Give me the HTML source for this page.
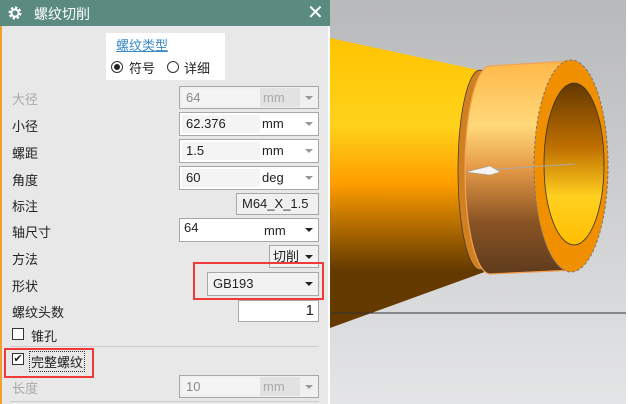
<!DOCTYPE html>
<html><head><meta charset="utf-8"><style>
*{margin:0;padding:0;box-sizing:border-box}
body{width:628px;height:404px;overflow:hidden;position:relative;background:#fff;font-family:"Liberation Sans","Noto Sans CJK SC",sans-serif;font-size:13px;color:#222}
.abs{position:absolute}
#panel{left:0;top:0;width:328px;height:404px;background:#e8e8e8;border-left:2px solid #f0a030}
#title{left:0;top:0;width:330px;height:26px;background:#5a8a80;color:#fff;font-size:14px}
.lbl{position:absolute;left:12px;font-size:13px}
.box{position:absolute;border:1px solid #a8a8a8;background:#fff;font-size:13px}
.val{position:absolute;left:2px;top:2px;bottom:2px;width:78px;background:#f4f4f4;padding-left:4px;line-height:18px}
.unit{position:absolute;left:82px;top:0;line-height:22px}
.arr{position:absolute;right:5px;top:9px;width:0;height:0;border-left:4px solid transparent;border-right:4px solid transparent;border-top:4px solid #999}
.arrd{border-top-color:#222}
.red{position:absolute;border:2.5px solid #f03a3a}
</style></head><body>
<div id="panel" class="abs"></div>
<div id="title" class="abs">
 <svg class="abs" style="left:8px;top:6px" width="14" height="14" viewBox="0 0 14 14"><circle cx="7" cy="7" r="5" fill="none" stroke="#fff" stroke-width="3" stroke-dasharray="2.2 1.7"/><circle cx="7" cy="7" r="3.6" fill="none" stroke="#fff" stroke-width="2"/></svg>
 <div class="abs" style="left:34px;top:4px">螺纹切削</div>
 <div class="abs" style="left:307px;top:0px;font-size:20px;line-height:26px">✕</div>
</div>
<div class="abs" style="left:106px;top:33px;width:119px;height:47px;background:#fff"></div>
<div class="abs" style="left:116px;top:35px;color:#3a8ac8;text-decoration:underline;font-size:13px">螺纹类型</div>
<div class="abs" style="left:111px;top:61px;width:12px;height:12px;border:1px solid #333;border-radius:50%"><div style="margin:2px;width:6px;height:6px;border-radius:50%;background:#222"></div></div>
<div class="abs" style="left:129px;top:58px">符号</div>
<div class="abs" style="left:167px;top:61px;width:12px;height:12px;border:1px solid #333;border-radius:50%"></div>
<div class="abs" style="left:184px;top:58px">详细</div>

<div class="lbl" style="top:89px;color:#aaa">大径</div>
<div class="box" style="left:179px;top:86px;width:140px;height:23px;background:#f0f0f0"><div class="val" style="color:#888">64</div><div class="unit" style="left:80px;top:1px;bottom:1px;width:40px;background:#e2e2e2;color:#aaa;padding-left:3px;line-height:20px">mm</div><div class="arr"></div></div>
<div class="lbl" style="top:116px">小径</div>
<div class="box" style="left:179px;top:112px;width:140px;height:24px"><div class="val">62.376</div><div class="unit">mm</div><div class="arr"></div></div>
<div class="lbl" style="top:143px">螺距</div>
<div class="box" style="left:179px;top:139px;width:140px;height:24px"><div class="val">1.5</div><div class="unit">mm</div><div class="arr"></div></div>
<div class="lbl" style="top:170px">角度</div>
<div class="box" style="left:179px;top:166px;width:140px;height:24px"><div class="val">60</div><div class="unit">deg</div><div class="arr"></div></div>
<div class="lbl" style="top:196px">标注</div>
<div class="box" style="left:236px;top:193px;width:83px;height:22px;background:#f0f0f0;padding-left:5px;line-height:20px">M64_X_1.5</div>
<div class="lbl" style="top:222px">轴尺寸</div>
<div class="box" style="left:179px;top:218px;width:140px;height:24px"><div style="position:absolute;left:4px;top:1px">64</div><div class="unit" style="left:84px;top:1px">mm</div><div class="arr arrd"></div></div>
<div class="lbl" style="top:249px">方法</div>
<div class="box" style="left:269px;top:245px;width:50px;height:23px;background:#f2f2f2;padding-left:3px;line-height:21px">切削<div class="arr arrd"></div></div>
<div class="lbl" style="top:276px">形状</div>
<div class="box" style="left:207px;top:272px;width:112px;height:24px;background:#f2f2f2;padding-left:5px;line-height:22px">GB193<div class="arr arrd"></div></div>
<div class="red" style="left:193px;top:262px;width:131px;height:38px"></div>
<div class="lbl" style="top:302px">螺纹头数</div>
<div class="box" style="left:238px;top:300px;width:81px;height:22px;text-align:right;padding-right:4px;line-height:20px;font-size:15px">1</div>
<div class="abs" style="left:12px;top:328px;width:12px;height:12px;border:1px solid #333;background:#fff"></div>
<div class="lbl" style="top:326px;left:31px">锥孔</div>
<div class="abs" style="left:10px;top:346px;width:309px;height:1px;background:#ccc"></div>
<div class="abs" style="left:12px;top:353px;width:12px;height:12px;border:1px solid #333;background:#fff;font-size:11px;line-height:10px;text-align:center">✔</div>
<div class="abs" style="left:29px;top:351px;border:1px dotted #333;padding:0 1px">完整螺纹</div>
<div class="red" style="left:4px;top:348px;width:90px;height:30px"></div>
<div class="lbl" style="top:378px;color:#aaa">长度</div>
<div class="box" style="left:179px;top:375px;width:140px;height:23px;background:#f0f0f0"><div class="val" style="color:#888">10</div><div class="unit" style="left:80px;top:1px;bottom:1px;width:40px;background:#e2e2e2;color:#aaa;padding-left:3px;line-height:20px">mm</div><div class="arr"></div></div>
<div class="abs" style="left:10px;top:401px;width:309px;height:1px;background:#ccc"></div>

<svg class="abs" style="left:330px;top:0" width="296" height="404" viewBox="330 0 296 404">
<defs>
<linearGradient id="bg" x1="0" y1="0" x2="0" y2="1"><stop offset="0" stop-color="#b8b9bb"/><stop offset="1" stop-color="#e4e5e6"/></linearGradient>
<linearGradient id="cone" x1="0" y1="0" x2="0" y2="1"><stop offset="0" stop-color="#ffc400"/><stop offset=".3" stop-color="#ffd21a"/><stop offset=".5" stop-color="#ff9e00"/><stop offset=".8" stop-color="#653a00"/><stop offset="1" stop-color="#643a00"/></linearGradient>
<linearGradient id="cyl" gradientUnits="userSpaceOnUse" x1="0" y1="62" x2="0" y2="274"><stop offset="0" stop-color="#ffb84a"/><stop offset=".3" stop-color="#ffd87a"/><stop offset=".5" stop-color="#e69a48"/><stop offset=".75" stop-color="#8a5424"/><stop offset="1" stop-color="#5e3b1c"/></linearGradient>
<linearGradient id="hole" x1="0" y1="0" x2="0" y2="1"><stop offset="0" stop-color="#643800"/><stop offset=".4" stop-color="#c07000"/><stop offset=".7" stop-color="#ffd020"/><stop offset="1" stop-color="#ffbe00"/></linearGradient>
</defs>
<rect x="330" y="0" width="296" height="404" fill="url(#bg)"/>
<polygon points="330,38 478,70 490,270 330,328" fill="url(#cone)"/>
<ellipse cx="480" cy="170" rx="22" ry="100" fill="#d08020" stroke="#333" stroke-width=".7"/>
<path d="M490,66 L570,61 L575,270 L490,274 A25,104 0 0 1 490,66 Z" fill="url(#cyl)" stroke="#f5a050" stroke-width="1.2"/>
<ellipse cx="571" cy="166" rx="37" ry="106" fill="#f09000" stroke="#777" stroke-width="1" stroke-dasharray="3 2"/>
<ellipse cx="574" cy="164" rx="30" ry="81" fill="url(#hole)" stroke="#333" stroke-width=".8"/>
<line x1="470" y1="171" x2="575" y2="164" stroke="#aaa" stroke-width="1"/>
<polygon points="466,172 490,166 500,172 490,175" fill="#f4f4f4" stroke="#999" stroke-width=".5"/>
<line x1="330" y1="313" x2="626" y2="313" stroke="#333" stroke-width="1"/>
</svg>
</body></html>
